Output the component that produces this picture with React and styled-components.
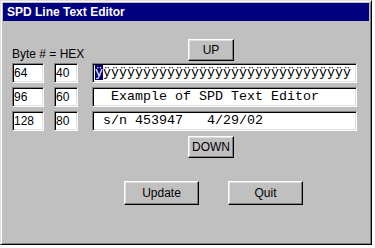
import styled, { createGlobalStyle } from "styled-components"

const GlobalStyle = createGlobalStyle`
  body {
    margin: 0;
    background: #fff;
  }
`

const rows = [
  { byte: "64", hex: "40", text: "ÿ".repeat(31), first: "ÿ" },
  { byte: "96", hex: "60", text: "  Example of SPD Text Editor" },
  { byte: "128", hex: "80", text: " s/n 453947   4/29/02" },
]

export default function App() {
  return (
    <>
      <GlobalStyle />
      <Window>
        <TitleBar>SPD Line Text Editor</TitleBar>
        <Body>
          <Form>
            <Label>Byte # = HEX</Label>
            <Cell $col={3}>
              <Button $w={46} $h={22} $ml={96}>UP</Button>
            </Cell>
            {rows.map((row) => (
              <Row key={row.byte}>
                <Field $w={32}>{row.byte}</Field>
                <Field $w={24}>{row.hex}</Field>
                <Field $w={265} $mono>
                  {row.first && <Selected>{row.first}</Selected>}
                  {row.text}
                </Field>
              </Row>
            ))}
            <Cell $col={3} $mt={1}>
              <Button $w={46} $h={22} $ml={96}>DOWN</Button>
            </Cell>
          </Form>
          <Actions>
            <Button $w={75} $h={24}>Update</Button>
            <Button $w={75} $h={24}>Quit</Button>
          </Actions>
        </Body>
      </Window>
    </>
  )
}

const Window = styled.div`
    width: 372px;
    height: 245px;
    box-sizing: border-box;
    background: #c0c0c0;
    border: 1px solid;
    border-color: #dfdfdf #000 #000 #dfdfdf;
    box-shadow: inset 1px 1px #fff, inset -1px -1px #808080;
    padding: 2px;
    display: flex;
    flex-direction: column;
`
const TitleBar = styled.div`
    height: 18px;
    background: #000080;
    color: #fff;
    font-family: "Liberation Sans", Arial, sans-serif;
    font-weight: 700;
    font-size: 12px;
    display: flex;
    align-items: center;
    padding-left: 4px;
`
const Body = styled.div`
    padding: 18px 0 0 9px;
    font-family: "Liberation Sans", Arial, sans-serif;
    font-size: 12px;
    color: #000;
`
const Form = styled.div`
    display: grid;
    grid-template-columns: 42px 38px 265px;
    grid-template-rows: 20px;
    grid-auto-rows: 20px;
    row-gap: 4px;
`
const Row = styled.div`
    display: contents;
`
const Cell = styled.div`
    grid-column: ${(p) => p.$col};
    margin-top: ${(p) => p.$mt || 0}px;
`
const Label = styled.div`
    grid-column: 1 / 3;
    align-self: end;
    line-height: 14px;
    margin-bottom: -2px;
`
const Field = styled.div`
    width: ${(p) => p.$w}px;
    height: 20px;
    box-sizing: border-box;
    background: #fff;
    border: 1px solid;
    border-color: #808080 #fff #fff #808080;
    box-shadow: inset 1px 1px #000, inset -1px -1px #dfdfdf;
    padding: 0 ${(p) => (p.$mono ? 2 : 1)}px;
    font-family: ${(p) => (p.$mono ? '"Liberation Mono", "Courier New", monospace' : '"Liberation Sans", Arial, sans-serif')};
    font-size: ${(p) => (p.$mono ? "13.33px" : "12px")};
    line-height: 18px;
    white-space: pre;
    overflow: hidden;
`
const Selected = styled.span`
    background: #000080;
    color: #fff;
`
const Button = styled.button`
    width: ${(p) => p.$w}px;
    height: ${(p) => p.$h}px;
    margin-left: ${(p) => p.$ml || 0}px;
    box-sizing: border-box;
    background: #c0c0c0;
    border: 1px solid;
    border-color: #fff #000 #000 #fff;
    box-shadow: inset -1px -1px #808080, inset 1px 1px #dfdfdf;
    font-family: "Liberation Sans", Arial, sans-serif;
    font-size: 12px;
    color: #000;
    padding: 0;
    display: block;
`
const Actions = styled.div`
    display: flex;
    gap: 29px;
    margin: 26px 0 0 112px;
`
